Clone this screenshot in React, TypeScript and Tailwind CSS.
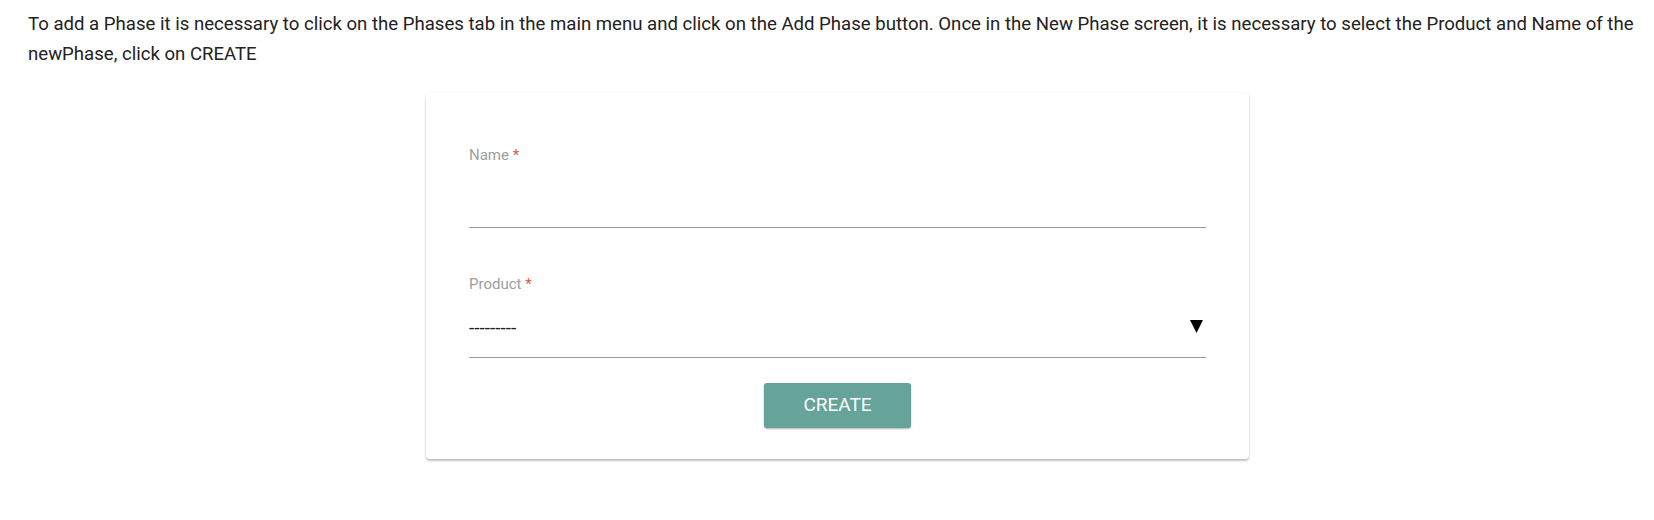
export default function App() {
  return (
    <div className="min-h-screen bg-white pl-[28px] pr-[16px] pt-[9px] font-['Roboto',sans-serif]">
      <p className="text-[18.6px] leading-[30px] text-[#222]">
        To add a Phase it is necessary to click on the Phases tab in the main menu and click on the Add Phase button. Once in the New Phase screen, it is necessary to select the Product and Name of the newPhase, click on CREATE
      </p>

      <div className="ml-[398px] mt-[24px] w-[823px] rounded-[4px] bg-white px-[43px] pb-[31px] pt-[52px] shadow-[0_1px_3px_rgba(0,0,0,0.12),0_2px_2px_rgba(0,0,0,0.18)]">
        {/* Name */}
        <label className="block text-[15px] leading-[20px] text-[#9e9e9e]">
          Name <span className="text-[#e0574a]">*</span>
        </label>
        <div className="h-[63px] border-b border-[#9a9a9a]" />

        {/* Product */}
        <label className="mt-[46px] block text-[15px] leading-[20px] text-[#9e9e9e]">
          Product <span className="text-[#e0574a]">*</span>
        </label>
        <div className="flex h-[64px] items-center justify-between border-b border-[#9a9a9a] pt-[4px]">
          <span className="text-[19px] leading-none text-[#222]">---------</span>
          <svg width="13" height="14" viewBox="0 0 13 14" className="mr-[3px] mb-[4px]">
            <polygon points="0,1 13,1 6.5,14" fill="#000" />
          </svg>
        </div>

        <div className="mt-[25px] flex justify-center">
          <button className="h-[45px] w-[147px] rounded-[3px] bg-[#66a39b] text-[19px] font-normal text-white shadow-[0_1px_2px_rgba(0,0,0,0.3)]">
            CREATE
          </button>
        </div>
      </div>
    </div>
  );
}
